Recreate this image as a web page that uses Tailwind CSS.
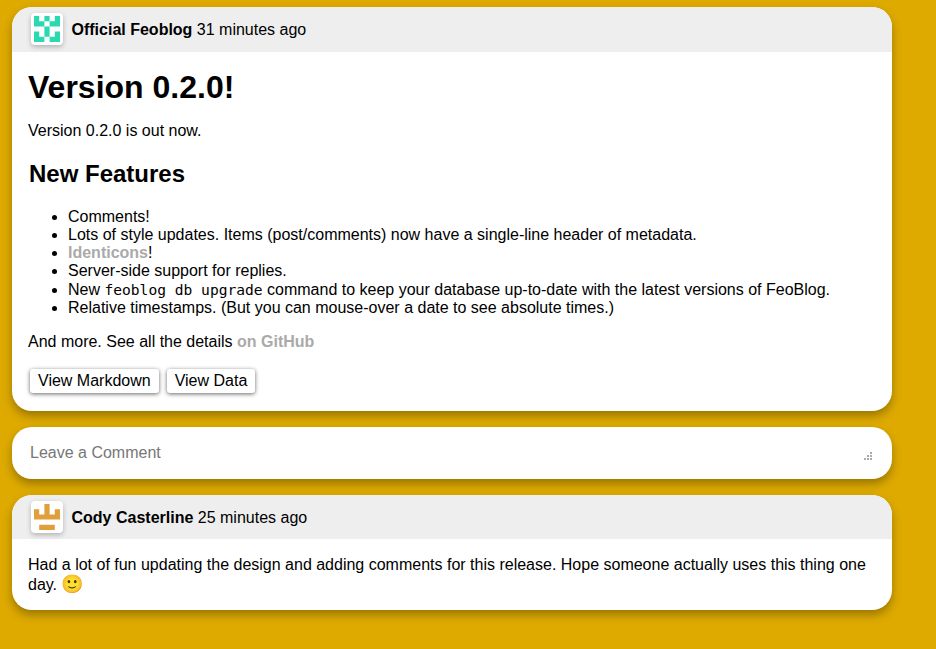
<!DOCTYPE html>
<html>
<head>
<meta charset="utf-8">
<script src="https://cdn.jsdelivr.net/npm/@tailwindcss/browser@4"></script>
</head>
<body class="bg-[#deaa00] h-[649px] overflow-hidden font-['Liberation_Sans',Arial,sans-serif] text-black text-[16px] leading-[18px]">
<div class="w-[880px] ml-3 pt-[7px] flex flex-col gap-4">

<article class="bg-white rounded-[20px] overflow-hidden shadow-[0_5px_10px_rgba(0,0,0,0.3)]">
  <header class="bg-[#eeeeee] h-[45px] pb-px flex items-center pl-[19px] gap-[8.5px]">
    <div class="w-8 h-8 bg-white rounded-[4px] shadow-[0_2px_5px_rgba(0,0,0,0.25)] flex items-center justify-center">
      <svg width="26" height="26" viewBox="0 0 5 5" fill="#2bd9b0">
        <path d="M0 0h1v1h-1zM2 0h1v1h-1zM4 0h1v1h-1zM0 1h2v1h-2zM3 1h2v1h-2zM2 2h1v1h-1zM0 3h1v1h-1zM2 3h1v1h-1zM4 3h1v1h-1zM0 4h2v1h-2zM3 4h2v1h-2z"/>
      </svg>
    </div>
    <div class="pt-0.5"><b>Official Feoblog</b> <span>31 minutes ago</span></div>
  </header>
  <div class="px-4 pt-[17px] pb-[18px]">
    <h1 class="text-[32px] leading-[37px] font-bold">Version 0.2.0!</h1>
    <p class="mt-4">Version 0.2.0 is out now.</p>
    <h2 class="text-[24px] leading-[28px] font-bold mt-5 pl-px">New Features</h2>
    <ul class="list-disc pl-10 mt-5">
      <li>Comments!</li>
      <li>Lots of style updates. Items (post/comments) now have a single-line header of metadata.</li>
      <li><a class="font-bold text-[#aaaaaa]">Identicons</a>!</li>
      <li>Server-side support for replies.</li>
      <li class="leading-[19px]">New <code class="font-['DejaVu_Sans_Mono',monospace] text-[14.6px]">feoblog db upgrade</code> command to keep your database up-to-date with the latest versions of FeoBlog.</li>
      <li>Relative timestamps. (But you can mouse-over a date to see absolute times.)</li>
    </ul>
    <p class="mt-4">And more. See all the details <a class="font-bold text-[#aaaaaa]">on GitHub</a></p>
    <div class="flex gap-2 mt-[18px] pl-0.5">
      <button class="h-6 px-2 bg-white rounded-[3px] shadow-[0_1px_4px_rgba(0,0,0,0.6)]">View Markdown</button>
      <button class="h-6 px-2 bg-white rounded-[3px] shadow-[0_1px_4px_rgba(0,0,0,0.6)]">View Data</button>
    </div>
  </div>
</article>

<article class="relative bg-white rounded-[20px] h-[52px] shadow-[0_5px_10px_rgba(0,0,0,0.3)] px-[18px] pt-[17px] text-[#777777]">
  Leave a Comment
  <svg class="absolute right-5 bottom-[19px]" width="8" height="8" viewBox="0 0 8 8" fill="#aaaaaa" shape-rendering="crispEdges">
    <path d="M6 0h2v2h-2zM3 3h2v2h-2zM6 3h2v2h-2zM0 6h2v2h-2zM3 6h2v2h-2zM6 6h2v2h-2z"/>
  </svg>
</article>

<article class="bg-white rounded-[20px] overflow-hidden shadow-[0_5px_10px_rgba(0,0,0,0.3)]">
  <header class="bg-[#eeeeee] h-11 flex items-center pl-[19px] gap-[8.5px]">
    <div class="w-8 h-8 bg-white rounded-[4px] shadow-[0_2px_5px_rgba(0,0,0,0.25)] flex items-center justify-center">
      <svg width="26" height="26" viewBox="0 0 5 5" fill="#e09f3a">
        <path d="M2 0h1v1h-1zM0 1h1v1h-1zM2 1h1v1h-1zM4 1h1v1h-1zM0 2h5v1h-5zM1 4h3v1h-3z"/>
      </svg>
    </div>
    <div class="pt-0.5"><b>Cody Casterline</b> <span>25 minutes ago</span></div>
  </header>
  <div class="px-4 pt-4 pb-[15px] leading-5">
    Had a lot of fun updating the design and adding comments for this release. Hope someone actually uses this thing one day. <span class="font-['Noto_Color_Emoji',sans-serif] text-[18px] leading-none">🙂</span>
  </div>
</article>

</div>
</body>
</html>
